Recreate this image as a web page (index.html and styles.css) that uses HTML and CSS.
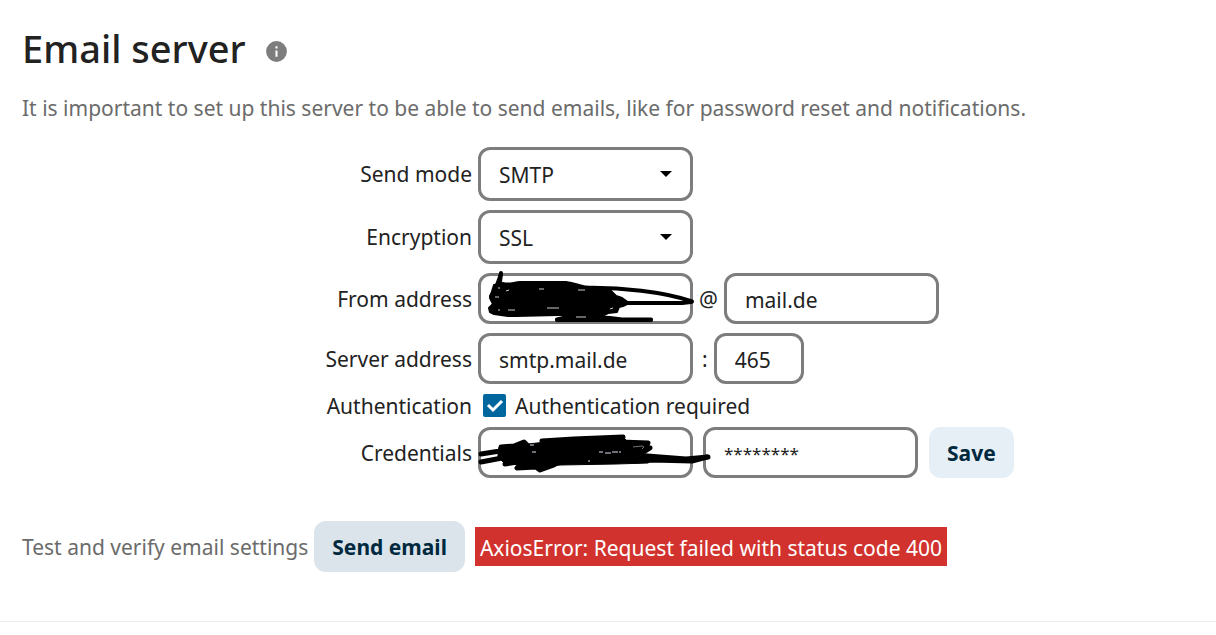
FILE: index.html
```html
<!DOCTYPE html>
<html lang="en">
<head>
    <meta charset="UTF-8">
    <meta name="viewport" content="width=device-width, initial-scale=1.0">
    <title>Email server</title>
    <link rel="stylesheet" href="styles.css">
</head>
<body>
    <main class="section">
        <div class="section-header">
            <h2>Email server</h2>
            <a href="#" class="info-link" aria-label="Open documentation">
                <svg viewBox="0 0 24 24" width="25" height="25" fill="currentColor">
                    <path d="M13 9h-2V7h2m0 10h-2v-6h2m-1-9a10 10 0 1 0 0 20 10 10 0 0 0 0-20z"/>
                </svg>
            </a>
        </div>
        <p class="settings-hint">It is important to set up this server to be able to send emails, like for password reset and notifications.</p>

        <form class="mail-form">
            <div class="row">
                <label class="row-label" for="mail_smtpmode">Send mode</label>
                <select id="mail_smtpmode" class="field select">
                    <option selected>SMTP</option>
                    <option>Sendmail</option>
                </select>
            </div>

            <div class="row">
                <label class="row-label" for="mail_smtpsecure">Encryption</label>
                <select id="mail_smtpsecure" class="field select">
                    <option>None</option>
                    <option selected>SSL</option>
                </select>
            </div>

            <div class="row">
                <label class="row-label" for="mail_from_address">From address</label>
                <div class="masked">
                    <input type="text" id="mail_from_address" class="field">
                    <svg class="scribble scribble-from" viewBox="0 0 250 70" width="250" height="70">
                        <g stroke="#000" stroke-linecap="round" stroke-linejoin="round">
                            <path d="M24 23L33 21C40 23 44 20 50 20L96 20C106 21 112 25 120 25L141 29L146 34L152 36L159 41L153 44L149 45L147 50L138 51L134 53L88 53L46 54L38 54L24 52L20 50L19 46L23 42L20 36Z" fill="#000" stroke-width="2"/>
                            <path d="M31 11L30 20" fill="none" stroke-width="4"/>
                            <path d="M31 12L26 26L21 34" fill="none" stroke-width="4"/>
                            <path d="M112 26C150 25 195 30 222 39.500" fill="none" stroke-width="4"/>
                            <path d="M221 40L212 41L156 41" fill="none" stroke-width="4"/>
                            <path d="M87 57.500L102 54L140 56L152 57.500H181" fill="none" stroke-width="4"/>
                            <path d="M87 58H181" fill="none" stroke-width="4"/>
                        </g>
                        <path d="M25 35h4M28 26h2M36 29l3-1M28 48h2M38 48h7M69 27h5M108 28h7M77 46h12M140 47l3-1M106 55h10" fill="none" stroke="#ccc" stroke-width="1"/>
                    </svg>
                </div>
                <span>@</span>
                <input type="text" class="field" value="mail.de" aria-label="Email domain">
            </div>

            <div class="row">
                <label class="row-label" for="mail_smtphost">Server address</label>
                <input type="text" id="mail_smtphost" class="field" value="smtp.mail.de">
                <span class="colon">:</span>
                <input type="text" class="field field-port" value="465" aria-label="Port">
            </div>

            <div class="row row-check">
                <span class="row-label">Authentication</span>
                <input type="checkbox" id="mail_smtpauth" class="checkbox" checked>
                <label for="mail_smtpauth">Authentication required</label>
            </div>

            <div class="row row-credentials">
                <label class="row-label" for="mail_smtpname">Credentials</label>
                <div class="masked">
                    <input type="text" id="mail_smtpname" class="field">
                    <svg class="scribble scribble-credentials" viewBox="0 0 260 70" width="260" height="70">
                        <path d="M29 28L46 26L58 24L76 22L100 18L152 16L158 22L177 23L180 27L176 32L168 34L182 40L178 43L146 44L90 45L72 48L56 46L34 43L31 40L28 38L28 33Z" fill="#000" stroke="#000" stroke-width="1" stroke-linejoin="round"/>
                        <g fill="none" stroke="#000" stroke-width="5" stroke-linecap="round" stroke-linejoin="round">
                            <path d="M11 34L30 31L31 27L44 26L54 22L58 26"/>
                            <path d="M11 42L32 38"/>
                            <path d="M72 21L104 19L153 17"/>
                            <path d="M35 44L54 41L47 48L66 47L70 50L84 45"/>
                            <path d="M150 22L178 23L175 27L180 28L172 33"/>
                            <path d="M165 35L190 37L216 39L238 37"/>
                            <path d="M165 41L182 40L222 41L237 37"/>
                        </g>
                        <path d="M60 25h4M62 32h4M118 41h2M129 32h4M135 33h6M142 32h6M149 32h2" fill="none" stroke="#dde" stroke-width="1"/>
                        <path d="M163 27l9-1 2 1-2 2" fill="none" stroke="#777" stroke-width="1"/>
                    </svg>
                </div>
                <input type="text" class="field field-password" value="********" aria-label="SMTP password">
                <button type="button" class="button">Save</button>
            </div>
        </form>

        <div class="test-row">
            <span class="test-text">Test and verify email settings</span>
            <button type="button" class="button button-hover">Send email</button>
            <span class="msg-error" role="alert">AxiosError: Request failed with status code 400</span>
        </div>
    </main>
</body>
</html>
```
FILE: styles.css
```css
* {
    box-sizing: border-box;
}

body {
    margin: 0;
    background: #fff;
    color: #222;
    font-family: "Noto Sans", "Open Sans", sans-serif;
    font-size: 21px;
    line-height: 36px;
}

.section {
    padding: 24px 22px 49px;
    border-bottom: 1px solid #ededed;
}

.section-header {
    display: flex;
    align-items: center;
    gap: 18px;
}

h2 {
    margin: 0;
    font-size: 38px;
    font-weight: 500;
    line-height: 48px;
}

.info-link {
    display: flex;
    margin-top: 6px;
    color: #7d7d7d;
}

.settings-hint {
    margin: 18px 0 21px;
    color: #6b6b6b;
}

.mail-form {
    display: flex;
    flex-direction: column;
    gap: 9px;
}

.row {
    display: flex;
    align-items: center;
    gap: 6px;
}

.row-label {
    width: 450px;
    text-align: right;
}

.field {
    display: block;
    width: 215px;
    height: 51px;
    padding: 2px 18px 0;
    border: 3px solid #7d7d7d;
    border-radius: 12px;
    background: #fff;
    color: #222;
    font: inherit;
}

.select {
    height: 54px;
    appearance: none;
    background: #fff url("data:image/svg+xml,%3Csvg xmlns='http://www.w3.org/2000/svg' width='12' height='6'%3E%3Cpath d='M0 0h12L6 6z'/%3E%3C/svg%3E") no-repeat right 18px center;
}

.field-port {
    width: 90px;
}

.field-password {
    font-size: 17px;
}

.colon {
    padding-left: 3px;
}

.row-check {
    height: 25px;
}

.checkbox {
    appearance: none;
    width: 23px;
    height: 23px;
    margin: 0 3px 0 5px;
    border-radius: 2px;
    background: #00679e url("data:image/svg+xml,%3Csvg xmlns='http://www.w3.org/2000/svg' width='23' height='23'%3E%3Cpath d='M5 11l5 5 9-9' fill='none' stroke='%23fff' stroke-width='3'/%3E%3C/svg%3E");
}

.row-credentials .field + .button {
    margin-left: 5px;
}

.row-credentials .masked {
    margin-right: 4px;
}

.masked {
    position: relative;
}

/* redaction strokes drawn over the inputs */
.scribble {
    position: absolute;
    left: -8px;
    pointer-events: none;
}

.scribble-from {
    top: -11px;
}

.scribble-credentials {
    top: -7px;
}

.button {
    height: 51px;
    padding: 0 18px;
    border: none;
    border-radius: 12px;
    background: #e5eff5;
    color: #00293f;
    font: inherit;
    font-weight: bold;
}

.button-hover {
    background: #dbe4eb;
}

.test-row {
    display: flex;
    align-items: center;
    gap: 6px;
    margin-top: 43px;
}

.test-text {
    color: #6b6b6b;
}

.msg-error {
    margin-left: 4px;
    padding: 3px 5px 0;
    background: #d2322d;
    color: #fff;
}
```
